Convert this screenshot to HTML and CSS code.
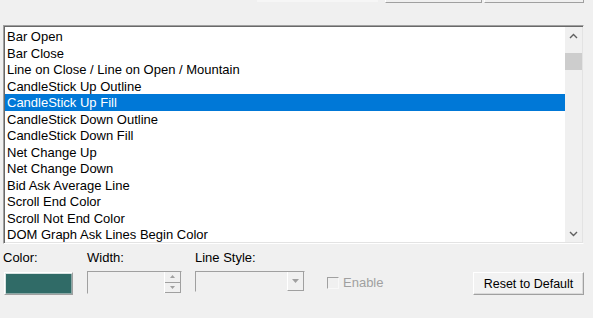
FILE: index.html
```html
<!DOCTYPE html>
<html lang="en">

<head>
  <meta charset="UTF-8">
  <meta name="viewport" content="width=device-width, initial-scale=1.0">
  <title>Chart Colors</title>
  <link rel="stylesheet" href="styles.css">
</head>

<body>

  <div class="top-strip">
    <span class="stub stub-field"></span>
    <span class="stub stub-btn"></span>
    <span class="stub stub-btn stub-btn-2"></span>
  </div>

  <div class="listbox">
    <ul class="items">
      <li>Bar Open</li>
      <li>Bar Close</li>
      <li>Line on Close / Line on Open / Mountain</li>
      <li>CandleStick Up Outline</li>
      <li class="selected">CandleStick Up Fill</li>
      <li>CandleStick Down Outline</li>
      <li>CandleStick Down Fill</li>
      <li>Net Change Up</li>
      <li>Net Change Down</li>
      <li>Bid Ask Average Line</li>
      <li>Scroll End Color</li>
      <li>Scroll Not End Color</li>
      <li>DOM Graph Ask Lines Begin Color</li>
    </ul>
    <div class="scrollbar">
      <span class="arrow">
        <svg width="9" height="6" viewBox="0 0 9 6"><path d="M1 5 L4.5 1.5 L8 5" fill="none" stroke="#606060" stroke-width="1.4"/></svg>
      </span>
      <span class="thumb"></span>
      <span class="track"></span>
      <span class="arrow">
        <svg width="9" height="6" viewBox="0 0 9 6"><path d="M1 1 L4.5 4.5 L8 1" fill="none" stroke="#606060" stroke-width="1.4"/></svg>
      </span>
    </div>
  </div>

  <div class="props">
    <div class="prop prop-color">
      <span class="label">Color:</span>
      <div class="swatch"></div>
    </div>
    <div class="prop prop-width">
      <span class="label">Width:</span>
      <div class="field spin">
        <span class="spin-btns">
          <span class="spin-btn">
            <svg width="5" height="3" viewBox="0 0 5 3"><path d="M0 3 L2.5 0 L5 3Z" fill="#a0a0a0"/></svg>
          </span>
          <span class="spin-btn">
            <svg width="5" height="3" viewBox="0 0 5 3"><path d="M0 0 L2.5 3 L5 0Z" fill="#a0a0a0"/></svg>
          </span>
        </span>
      </div>
    </div>
    <div class="prop prop-style">
      <span class="label">Line Style:</span>
      <div class="field combo">
        <span class="combo-btn">
          <svg width="7" height="4" viewBox="0 0 7 4"><path d="M0 0 L3.5 4 L7 0Z" fill="#a0a0a0"/></svg>
        </span>
      </div>
    </div>
    <label class="check">
      <span class="check-box"></span>
      <span class="check-text">Enable</span>
    </label>
    <button type="button" class="reset-btn">Reset to Default</button>
  </div>

</body>

</html>
```

FILE: styles.css
```css
body {
  margin: 0;
  background: #f0f0f0;
  font-family: 'Liberation Sans', Arial, sans-serif;
  font-size: 13px;
  color: #000;
  width: 593px;
  height: 318px;
  overflow: hidden;
}

/* bottoms of the controls above, cut off by the window */
.top-strip {
  display: flex;
  height: 4px;
}

.stub {
  display: block;
  height: 3px;
}

.stub-field {
  width: 121px;
  margin-left: 257px;
  height: 2px;
  background: #f6f6f6;
}

.stub-btn {
  width: 97px;
  margin-left: 7px;
  border-right: 1px solid #a0a0a0;
  border-bottom: 1px solid #a0a0a0;
  border-left: 1px solid #fff;
  box-sizing: border-box;
}

.stub-btn-2 {
  width: 100px;
  margin-left: 2px;
}

.listbox {
  display: flex;
  margin: 21px 0 0 3px;
  width: 581px;
  height: 219px;
  box-sizing: border-box;
  background: #fff;
  border-top: 1px solid #a0a0a0;
  border-left: 1px solid #a0a0a0;
  border-right: 1px solid #f0f0f0;
  border-bottom: 1px solid #fff;
  box-shadow: inset 1px 1px 0 #696969, inset -1px -1px 0 #e3e3e3;
  padding: 1px;
}

.items {
  flex: 1;
  list-style: none;
  margin: 0;
  padding: 1px 0 0 0;
  overflow: hidden;
}

.items li {
  height: 16.5px;
  line-height: 17px;
  padding-left: 2px;
  white-space: nowrap;
}

.items li.selected {
  background: #0078d7;
  color: #fff;
}

.scrollbar {
  width: 17px;
  display: flex;
  flex-direction: column;
  background: #f0f0f0;
}

.arrow {
  height: 17px;
  display: flex;
  align-items: center;
  justify-content: center;
}

.thumb {
  height: 17px;
  margin-top: 9px;
  background: #cdcdcd;
}

.track {
  flex: 1;
}

.props {
  display: flex;
  align-items: flex-start;
  padding: 6px 9px 0 3px;
}

.prop {
  display: flex;
  flex-direction: column;
  gap: 6px;
}

.label {
  line-height: 15px;
}

.prop-color {
  width: 84px;
}

.prop-width {
  width: 108px;
}

.prop-style {
  width: 132px;
}

.swatch {
  width: 69px;
  height: 23px;
  margin-top: 1px;
  margin-left: 1px;
  box-sizing: border-box;
  background: #306b67;
  border-top: 1px solid #fff;
  border-left: 1px solid #fff;
  border-right: 1px solid #a0a0a0;
  border-bottom: 1px solid #a0a0a0;
  box-shadow: inset 1px 1px 0 #d8e3e2, inset -1px -1px 0 #8aa7a5;
}

.field {
  height: 23px;
  box-sizing: border-box;
  border-top: 1px solid #a0a0a0;
  border-left: 1px solid #a0a0a0;
  border-right: 1px solid #f0f0f0;
  border-bottom: 1px solid #f0f0f0;
  display: flex;
  justify-content: flex-end;
}

.spin {
  width: 95px;
}

.spin-btns {
  width: 16px;
  display: flex;
  flex-direction: column;
  border-left: 1px solid #fff;
}

.spin-btn {
  flex: 1;
  display: flex;
  align-items: center;
  justify-content: center;
  border-right: 1px solid #a0a0a0;
  border-bottom: 1px solid #a0a0a0;
}

.combo {
  width: 110px;
  height: 21px;
}

.combo-btn {
  width: 15px;
  display: flex;
  align-items: center;
  justify-content: center;
  border-left: 1px solid #fff;
  border-right: 1px solid #a0a0a0;
  border-bottom: 1px solid #a0a0a0;
}

.check {
  display: flex;
  align-items: center;
  gap: 4px;
  height: 23px;
  margin-top: 21px;
  color: #a0a0a0;
}

.check-box {
  width: 12px;
  height: 12px;
  box-sizing: border-box;
  border-top: 1px solid #a0a0a0;
  border-left: 1px solid #a0a0a0;
  border-right: 1px solid #f8f8f8;
  border-bottom: 1px solid #f8f8f8;
}

.reset-btn {
  margin-left: auto;
  margin-top: 22px;
  width: 111px;
  height: 23px;
  padding: 0;
  font-family: inherit;
  font-size: 12.5px;
  color: #000;
  background: #f2f2f2;
  border-top: 1px solid #fff;
  border-left: 1px solid #fff;
  border-right: 1px solid #a0a0a0;
  border-bottom: 1px solid #a0a0a0;
  box-shadow: inset -1px -1px 0 #dadada;
}
```
